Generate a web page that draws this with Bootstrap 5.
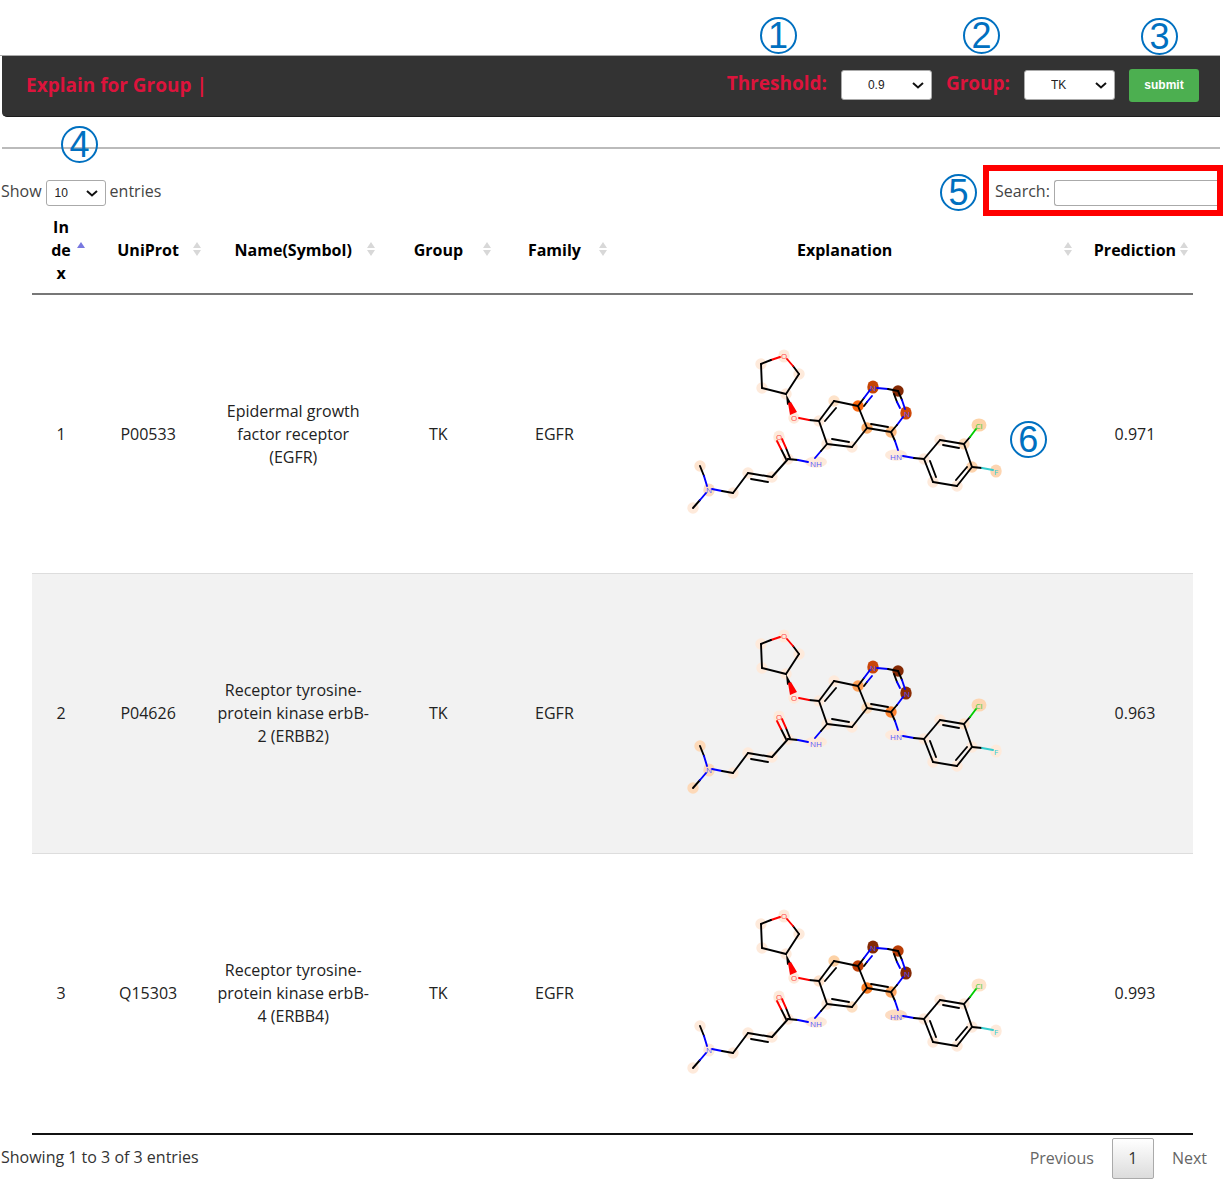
<!DOCTYPE html>
<html lang="en">
<head>
<meta charset="utf-8">
<meta name="viewport" content="width=device-width, initial-scale=1">
<title>Explain for Group</title>
<link href="https://cdn.jsdelivr.net/npm/bootstrap@5.3.0/dist/css/bootstrap.min.css" rel="stylesheet">
<style>
  body { font-family: "Open Sans", "Noto Sans", sans-serif; font-size: 16px; line-height: 23px; color: #444; background: #fff; }
  .page-wrap { padding-top: 55px; }
  .topbar-line { border-top: 1px solid #aaa; margin-right: 3px; }
  .topbar { height: 61px; margin-left: 2px; padding: 0 21px 2px 24px; background: #333; border-bottom: 1px solid #1c1c1c; border-radius: 0 0 0 5px; color: #dc143c; font-size: 19px; font-weight: 700; }
  .topbar form { gap: 14px; }
  .topbar .form-select { width: 91px; height: 30px; padding-left: 26px; }
  .form-select { font-family: "Liberation Sans", Arial, sans-serif; font-size: 12px; line-height: 16px; color: #222; padding: 0 20px 0 8px; border: 1px solid #aaa; border-radius: 3px; background-position: right 6px center; background-size: 14px 14px;
    background-image: url("data:image/svg+xml,%3csvg xmlns='http://www.w3.org/2000/svg' viewBox='0 0 14 14'%3e%3cpath fill='none' stroke='%23111' stroke-width='2' d='M2 5l5 4.500 5-4.500'/%3e%3c/svg%3e"); }
  .btn-send { width: 70px; height: 33px; padding: 0; background: #4caf50; border-radius: 3px; color: #fff; font: 700 12px "Liberation Sans", Arial, sans-serif; }
  .btn-send:hover { background: #43a047; color: #fff; }
  .rule { height: 2px; margin: 30px 3px 16px 2px; background: #bbb; }
  .len-select { width: 60px; height: 26px; }
  .len-label { padding-top: 15px; padding-left: 1px; }
  .search-frame { width: 240px; height: 51px; padding: 9px 0 4px 6px; border: 6px solid #f00; }
  .search-frame input { height: 26px; min-width: 0; border: 1px solid #aaa; border-right: 0; border-radius: 3px 0 0 3px; }
  .callout-no { position: absolute; width: 37px; height: 37px; border: 2px solid #0070c0; border-radius: 50%; color: #0070c0; font: 400 36px/34px "Liberation Sans", Arial, sans-serif; text-align: center; z-index: 2; }
  .at-threshold { left: 33px; top: -55px; }
  .at-group { left: 17px; top: -55px; }
  .at-submit { left: 12px; top: -51px; }
  .at-length { left: 61px; top: -39px; }
  .at-search { left: -49px; top: 3px; }
  .at-figure { left: 335px; top: 87px; }
  .result-area { padding: 0 30px 0 32px; }
  .result-table { width: 100%; table-layout: fixed; text-align: center; color: #222; border-bottom: 2px solid #111; border-collapse: separate; border-spacing: 0; }
  .result-table th { position: relative; padding: 0 18px 8px; vertical-align: middle; border-bottom: 2px solid #777; color: #000; font-weight: 700; }
  .result-table .tight { padding: 0 8px 8px; }
  .result-table .split-word { word-break: break-all; }
  .result-table td { height: 280px; padding: 0 10px; vertical-align: middle; border-top: 1px solid #ddd; }
  .result-table tbody tr:first-child td { height: 278px; border-top: 0; }
  .result-table tbody tr:nth-child(even) { background: #f2f2f2; }
  .w5 { width: 5%; } .w10 { width: 10%; } .w15 { width: 15%; } .w40 { width: 40%; }
  th::before, th::after { content: ""; position: absolute; right: 5px; border: 4px solid transparent; }
  th::before { top: 22px; border-bottom: 6px solid #d8d8d8; }
  th::after { top: 34px; border-top: 6px solid #d8d8d8; }
  .sorted::before { border-bottom-color: #7878e0; }
  .sorted::after { display: none; }
  .figure-box { width: 340px; }
  .mol-text { font-family: "Open Sans", sans-serif; font-size: 8px; text-anchor: middle; }
  .foot-info { padding: 11px 0 0 1px; color: #333; }
  .pager { padding: 3px 3px 0 0; }
  .pager a { height: 41px; padding: 0 13px; line-height: 41px; color: #666; text-decoration: none; }
  .pager .current-page { width: 42px; padding: 0; margin: 0 5px; line-height: 39px; border: 1px solid #aaa; border-radius: 2px; color: #333; text-align: center; background: linear-gradient(#fff, #dcdcdc); }
</style>
<script src="https://cdn.jsdelivr.net/npm/bootstrap@5.3.0/dist/js/bootstrap.bundle.min.js"></script>
</head>
<body>
<div class="page-wrap">
  <div class="topbar-line">
    <header class="topbar d-flex align-items-center justify-content-between">
      <div>Explain for Group |</div>
      <form class="d-flex align-items-center">
        <div class="position-relative pb-1"><label for="threshold">Threshold:</label><span class="callout-no at-threshold">1</span></div>
        <select id="threshold" class="form-select"><option>0.9</option><option>0.8</option></select>
        <div class="position-relative pb-1"><label for="group">Group:</label><span class="callout-no at-group">2</span></div>
        <select id="group" class="form-select"><option>TK</option><option>AGC</option></select>
        <div class="position-relative d-flex"><button type="button" class="btn btn-send">submit</button><span class="callout-no at-submit">3</span></div>
      </form>
    </header>
  </div>
  <div class="rule"></div>
  <div class="d-flex justify-content-between">
    <div class="len-label d-flex position-relative gap-1"><label for="len">Show</label>
      <select id="len" class="form-select len-select"><option>10</option><option>25</option></select><span>entries</span>
      <span class="callout-no at-length">4</span></div>
    <div class="search-frame d-flex align-items-center position-relative">
      <label for="search" class="pb-1">Search:</label><input id="search" type="search" class="flex-fill ms-1">
      <span class="callout-no at-search">5</span></div>
  </div>
  <main class="result-area">
    <table class="result-table">
      <thead><tr>
        <th class="w5 sorted split-word">Index</th><th class="w10">UniProt</th><th class="w15">Name(Symbol)</th><th class="w10">Group</th><th class="w10">Family</th><th class="w40">Explanation</th><th class="w10 tight">Prediction</th>
      </tr></thead>
      <tbody>
        <tr><td>1</td><td>P00533</td><td>Epidermal growth factor receptor (EGFR)</td><td>TK</td><td>EGFR</td><td><div class="figure-box mx-auto position-relative" data-mol="0"><span class="callout-no at-figure">6</span></div></td><td>0.971</td></tr>
        <tr><td>2</td><td>P04626</td><td>Receptor tyrosine-protein kinase erbB-<wbr>2 (ERBB2)</td><td>TK</td><td>EGFR</td><td><div class="figure-box mx-auto" data-mol="1"></div></td><td>0.963</td></tr>
        <tr><td>3</td><td>Q15303</td><td>Receptor tyrosine-protein kinase erbB-<wbr>4 (ERBB4)</td><td>TK</td><td>EGFR</td><td><div class="figure-box mx-auto" data-mol="2"></div></td><td>0.993</td></tr>
      </tbody>
    </table>
  </main>
  <footer class="d-flex justify-content-between">
    <div class="foot-info">Showing 1 to 3 of 3 entries</div>
    <nav class="pager d-flex" aria-label="Pages"><a href="#">Previous</a><a href="#" class="current-page">1</a><a href="#">Next</a></nav>
  </footer>
</div>
<script>
// Atom positions of the ligand
const atoms = {
  a:[26,132], b:[19,174], n:[35,156], c:[59,159], d:[74,139], e:[98,143], f:[114,125], o:[105,103], nh:[142,128],
  g:[153,110], h:[145,87], i:[160,67], j:[184,72], k:[193,94], l:[178,113], oe:[120,84], s:[112,60], t:[125,40], or:[110,22], u:[87,30], v:[88,54],
  n1:[199,53], ch:[224,57], n3:[232,79], m:[217,98], hn:[222,121], p:[250,125], q:[266,106], r:[290,110], w:[298,133], x:[283,152], y:[259,148], cl:[305,91], fl:[322,137]
};
const pale = '#feeadb';
// Atom weights shown as halo colours, one set per protein
const halos = [
  { j:'#f9670f', n1:'#c64404', ch:'#842904', n3:'#cf4808', m:'#fdbd83', k:'#fdaf6c', cl:'#fdd3a7', fl:'#fdd5b1', w:'#fdd3ac', r:'#fddcbc', n:'#fdddc2', i:'#fee3ca', a:'#fee4cf' },
  { j:'#fda057', n1:'#ca450a', ch:'#842904', n3:'#8c2d04', m:'#fc8431', k:'#fddcbb', cl:'#fdd6b2', a:'#fdd9b8', b:'#fdd9b8', n:'#fdd9b8', r:'#fee4cd' },
  { j:'#bd3e07', n1:'#842904', ch:'#b93d06', n3:'#842904', m:'#fda864', k:'#f97d25', i:'#fdd2a6', hn:'#fddcc2', cl:'#fee3ca', l:'#fddfc2', h:'#fee2cc' }
];
const K = '#000', B = '#0000ff', R = '#ff0000';
// x1, y1, x2, y2, colour
const strokes = [
  [26,132,30,142,K],[30,142,33,152,B],[19,174,26,166,K],[26,166,32,159,B],[38,155,48,157,B],[48,157,59,159,K],
  [59,159,74,139,K],[74,139,98,143,K],[77,145,94,148,K],[98,143,114,125,K],
  [112,125,107,115,K],[107,115,103,107,R],[116,124,112,114,K],[112,114,108,105,R],
  [114,125,124,126,K],[124,126,134,128,B],[141,124,147,117,B],[147,117,153,110,K],
  [153,110,145,87,K],[145,87,160,67,K],[151,87,162,74,K],[160,67,184,72,K],[184,72,193,94,K],[193,94,178,113,K],[178,113,153,110,K],[175,108,158,105,K],
  [145,87,135,86,K],[135,86,125,84,R],[112,60,125,40,K],[125,40,119,32,K],[119,32,113,25,R],[106,23,97,26,R],[97,26,87,30,K],[87,30,88,54,K],[88,54,112,60,K],
  [184,72,190,64,K],[190,64,196,56,B],[190,72,193,68,K],[193,68,198,62,B],[203,54,214,55,B],[214,55,224,57,K],
  [224,57,228,66,K],[228,66,231,75,B],[220,60,223,68,K],[223,68,226,74,B],[229,83,223,91,B],[223,91,217,98,K],
  [217,98,193,94,K],[214,93,197,90,K],[217,98,221,107,K],[221,107,224,116,B],[229,122,240,124,B],[240,124,250,125,K],
  [250,125,266,106,K],[266,106,290,110,K],[269,111,285,114,K],[290,110,298,133,K],[298,133,283,152,K],[293,133,282,146,K],[283,152,259,148,K],[259,148,250,125,K],[262,143,256,127,K],
  [290,110,296,103,K],[296,103,302,95,'#00cc00'],[298,133,308,134,K],[308,134,319,136,'#33cccc']
];
const labels = [['N',35,159],['O',105,106],['NH',142,133],['O',120,87],['O',110,25],['N',199,57],['N',233,83],['HN',222,126],['Cl',305,95],['F',322,141]];
const tint = { N:'#5555ff', NH:'#5555ff', HN:'#5555ff', O:'#ff4444', Cl:'#33cc33', F:'#33cccc' };
document.querySelectorAll('[data-mol]').forEach(box => {
  const set = halos[box.dataset.mol];
  let s = '<svg class="d-block w-100" viewBox="1 0 340 200" role="img" aria-label="Ligand structure">';
  for (const [key, [x, y]] of Object.entries(atoms)) {
    const rx = key === 'nh' || key === 'hn' ? 11 : key === 'cl' ? 7.5 : 5.7;
    const ry = ['cl','fl','n1','n3','or','o','n'].includes(key) ? 6.6 : 5.7;
    s += `<ellipse cx="${x}" cy="${y}" rx="${rx}" ry="${ry}" fill="${set[key] || pale}"/>`;
  }
  for (const [x1, y1, x2, y2, c] of strokes) s += `<path d="M${x1} ${y1}L${x2} ${y2}" stroke="${c}" stroke-width="1.9" stroke-linecap="round"/>`;
  s += '<path d="M112 60L117 69L113 71Z" fill="#000"/><path d="M114 69L117 68L123 78L116 81Z" fill="#f00"/>';
  for (const [t, x, y] of labels) s += `<text class="mol-text" x="${x}" y="${y}" fill="${tint[t]}">${t}</text>`;
  box.insertAdjacentHTML('afterbegin', s + '</svg>');
});
</script>
</body>
</html>
